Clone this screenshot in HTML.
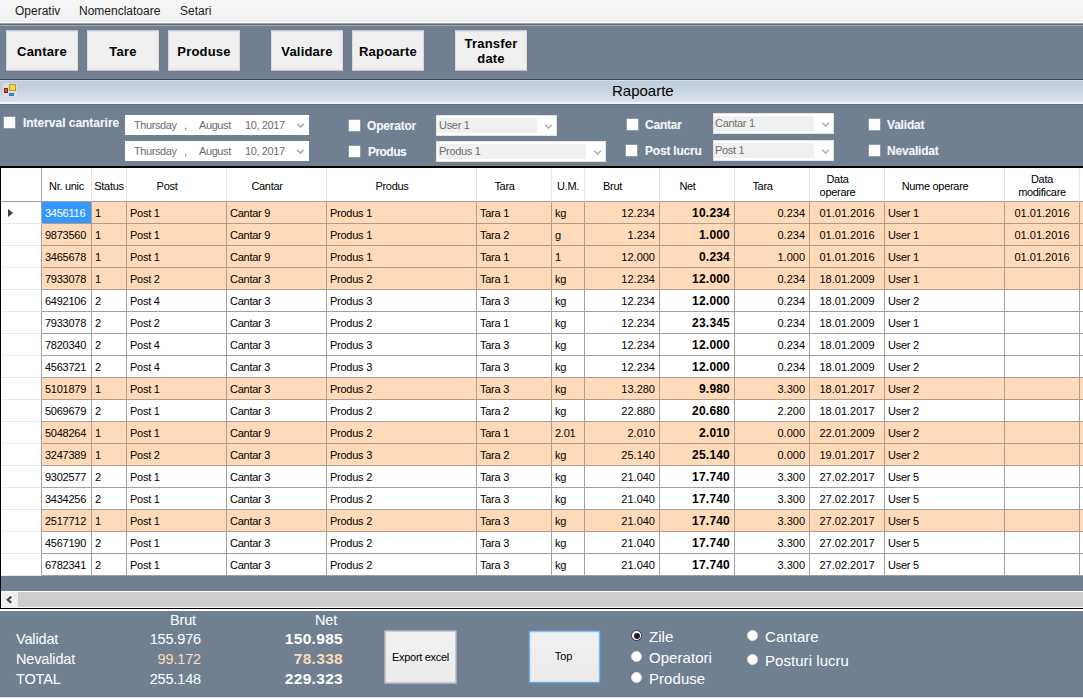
<!DOCTYPE html>
<html><head><meta charset="utf-8"><title>Rapoarte</title>
<style>
*{box-sizing:border-box;margin:0;padding:0}
html,body{width:1083px;height:699px;overflow:hidden}
body{background:#708090;font-family:"Liberation Sans",sans-serif;position:relative;color:#000}
.abs{position:absolute}
/* menu */
#menu{position:absolute;left:0;top:0;width:1083px;height:23px;background:linear-gradient(#f6f6f6,#f1f1f1);font-size:12px;color:#1a1a1a}
#menu span{position:absolute;top:4px;white-space:nowrap}
#mline{position:absolute;left:0;top:22px;width:1083px;height:4px;background:linear-gradient(#fdfdfd 0 25%,#9b9c9d 25% 50%,#67696c 50% 75%,#a0a8b2 75% 100%)}
/* toolbar buttons */
.tb{position:absolute;top:31px;transform:translateY(-0.5px);width:72px;height:40px;background:#efefef;border:1px solid #dadada;font-weight:bold;font-size:13px;text-align:center;line-height:40px;color:#000;letter-spacing:0.2px}
.tb.two{line-height:15px;padding-top:4px}
/* child title */
#tshadow{position:absolute;left:0;top:76px;width:1083px;height:4px;background:linear-gradient(#74818e 0 75%,#414c58 75% 100%)}
#title{position:absolute;left:0;top:80px;width:1083px;height:25px;background:linear-gradient(#d5dfe9 0 1px,#c1cedc 1px,#c6d2df 10px,#d3dde8 17px,#dce4ed 22px,#f3f7fb 22px,#f3f7fb 24px,#63707c 24px);font-size:15px;color:#000}
#title span{position:absolute;left:612px;top:2px}
/* filter */
.cb{position:absolute;width:11px;height:11px;background:#fff;box-shadow:0 0 0 0.5px rgba(255,255,255,.45)}
.fl{position:absolute;font-weight:bold;font-size:12px;color:rgba(255,255,255,.9);white-space:nowrap;letter-spacing:-0.2px;text-shadow:0 0 1px rgba(255,255,255,.35)}
.dp{position:absolute;left:125px;width:184px;height:20px;background:#fff;font-size:11px;color:#6d6d6d;white-space:nowrap}
.dp span{position:absolute;top:4px;letter-spacing:-0.4px}
.combo{position:absolute;height:21px;background:#fff;border:1px solid #e3e3e3}
.combo .in{position:absolute;left:1px;top:2px;bottom:2px;background:#f0f0f0;font-size:11px;color:#6d6d6d;line-height:14px;padding-left:1px;white-space:nowrap;letter-spacing:-0.3px}
.chev{position:absolute;width:9px;height:6px}
/* grid */
#grid{position:absolute;left:0;top:166px;width:1083px;height:443px;background:#000}
#gin{position:absolute;left:1px;top:168px;width:1082px;height:423px;background:#708090}
.hc{position:absolute;top:168px;height:34px;background:#fff;border-right:1px solid #e4e8ee;border-bottom:1px solid #a0a0a0;font-size:11px;text-align:center;display:flex;align-items:center;justify-content:center;line-height:13px;white-space:nowrap;padding-top:4px;letter-spacing:-0.3px}
.hc.two{padding-top:2px}
.hc.h0{border-right:1px solid #a0a0a0}
.rh{position:absolute;left:1px;width:41px;height:22px;background:#fff;border-right:1px solid #a0a0a0;border-bottom:1px solid #e4e8ee}
.c{position:absolute;height:22px;background:#fff;border-right:1px solid #a0a0a0;border-bottom:1px solid #a0a0a0;font-size:11px;line-height:21px;padding:1px 3px 0 3px;white-space:nowrap;overflow:hidden}
.c.p{background:#ffdab9;border-color:#b09c8c}
.c.al{letter-spacing:-0.25px}
.c.ar{text-align:right;padding-right:4px}
.c.arb{text-align:right;padding-right:4px;font-weight:bold;font-size:12px;letter-spacing:0.2px}
.c.ac{text-align:center}
.c.sel{background:#3399ff;color:#fff}
#arrow{position:absolute;left:8px;top:209px;width:0;height:0;border-left:5px solid #3c3c3c;border-top:4.5px solid transparent;border-bottom:4.5px solid transparent}
/* scrollbar */
#sb{position:absolute;left:1px;top:591px;width:1082px;height:17px;background:#cdcdcd;border-top:1px solid #fbfbfb;border-bottom:1px solid #f4f4f4}
#sbl{position:absolute;left:0;top:0;width:17px;height:15px;background:#f0f0f0}
/* bottom */
#wline{position:absolute;left:0;top:609px;width:1083px;height:2px;background:#fbfcfd}
.bt{position:absolute;font-size:14.5px;color:#fff;white-space:nowrap;letter-spacing:-0.15px;margin-top:1px}
.bt.rl{font-size:15px;letter-spacing:0.05px;margin-top:0}
.bt.r{text-align:right}
.bt.b{font-weight:bold;font-size:15.5px;letter-spacing:0.3px;margin-top:0}
.bt.pe{color:#ffdab9}
.btn{position:absolute;background:linear-gradient(#f1f1f1,#ebebeb);border:1px solid #dadada;font-size:11px;text-align:center;color:#000}
.rad{position:absolute;width:11px;height:11px;border-radius:50%;background:#fff;border:1px solid #e0e0e0}
.rad.on{border:1px solid #333}
.rad.on:after{content:"";position:absolute;left:1.5px;top:1.5px;width:6px;height:6px;border-radius:50%;background:#222}
#bstrip{position:absolute;left:0;top:696px;width:1083px;height:3px;background:#edf2f9;border-top:1px solid #687480}
</style></head><body>
<div id="menu"><span style="left:15px">Operativ</span><span style="left:79px">Nomenclatoare</span><span style="left:180px">Setari</span></div>
<div id="mline"></div>
<div class="tb" style="left:6px">Cantare</div>
<div class="tb" style="left:87px">Tare</div>
<div class="tb" style="left:168px">Produse</div>
<div class="tb" style="left:271px">Validare</div>
<div class="tb" style="left:352px">Rapoarte</div>
<div class="tb two" style="left:455px">Transfer<br>date</div>
<div id="tshadow"></div>
<div id="title">
<svg class="abs" style="left:3px;top:3px" width="14" height="14" viewBox="0 0 14 14"><rect x="0" y="0" width="14" height="14" fill="#dfe6ee" opacity=".6"/><rect x="6.5" y="1.5" width="6" height="6" fill="#f7d544" stroke="#c8961a"/><rect x="1.5" y="5.5" width="3" height="4" fill="#e5503f" stroke="#9a1d14"/><rect x="6.5" y="10.5" width="4" height="2" fill="#4d8eea" stroke="#3a6fd0"/></svg>
<span>Rapoarte</span></div>

<!-- filters -->
<div class="cb" style="left:4px;top:117px"></div><div class="fl" style="left:23px;top:116px;letter-spacing:-0.03px">Interval cantarire</div>
<div class="dp" style="top:115px"><span style="left:9px">Thursday</span><span style="left:59px">,</span><span style="left:74px">August</span><span style="left:120px">10, 2017</span>
<svg class="chev" style="left:171px;top:8px" viewBox="0 0 9 6"><path d="M1.2 0.8 L4.5 4.1 L7.8 0.8" fill="none" stroke="#a6a6a6" stroke-width="1.5"/></svg></div>
<div class="dp" style="top:141px"><span style="left:9px">Thursday</span><span style="left:59px">,</span><span style="left:74px">August</span><span style="left:120px">10, 2017</span>
<svg class="chev" style="left:171px;top:8px" viewBox="0 0 9 6"><path d="M1.2 0.8 L4.5 4.1 L7.8 0.8" fill="none" stroke="#a6a6a6" stroke-width="1.5"/></svg></div>

<div class="cb" style="left:349px;top:120px"></div><div class="fl" style="left:367px;top:119px">Operator</div>
<div class="cb" style="left:349px;top:146px"></div><div class="fl" style="left:368px;top:145px;letter-spacing:-0.55px">Produs</div>
<div class="combo" style="left:436px;top:115px;width:121px"><div class="in" style="width:99px">User 1</div>
<svg class="chev" style="left:107px;top:8px" viewBox="0 0 9 6"><path d="M1.2 0.8 L4.5 4.1 L7.8 0.8" fill="none" stroke="#b0b0b0" stroke-width="1.5"/></svg></div>
<div class="combo" style="left:436px;top:141px;width:170px"><div class="in" style="width:148px">Produs 1</div>
<svg class="chev" style="left:156px;top:8px" viewBox="0 0 9 6"><path d="M1.2 0.8 L4.5 4.1 L7.8 0.8" fill="none" stroke="#b0b0b0" stroke-width="1.5"/></svg></div>

<div class="cb" style="left:627px;top:119px"></div><div class="fl" style="left:645px;top:118px">Cantar</div>
<div class="cb" style="left:626px;top:145px"></div><div class="fl" style="left:645px;top:144px">Post lucru</div>
<div class="combo" style="left:713px;top:113px;width:121px"><div class="in" style="left:0;width:100px">Cantar 1</div>
<svg class="chev" style="left:107px;top:8px" viewBox="0 0 9 6"><path d="M1.2 0.8 L4.5 4.1 L7.8 0.8" fill="none" stroke="#b0b0b0" stroke-width="1.5"/></svg></div>
<div class="combo" style="left:713px;top:140px;width:121px"><div class="in" style="left:0;width:100px">Post 1</div>
<svg class="chev" style="left:107px;top:8px" viewBox="0 0 9 6"><path d="M1.2 0.8 L4.5 4.1 L7.8 0.8" fill="none" stroke="#b0b0b0" stroke-width="1.5"/></svg></div>

<div class="cb" style="left:869px;top:119px"></div><div class="fl" style="left:887px;top:118px">Validat</div>
<div class="cb" style="left:869px;top:145px"></div><div class="fl" style="left:887px;top:144px">Nevalidat</div>

<!-- grid -->
<div id="grid"></div>
<div id="gin"></div>
<div class="hc h0" style="left:1px;width:41px"><span></span></div>
<div class="hc" style="left:42px;width:50px"><span>Nr. unic</span></div>
<div class="hc" style="left:92px;width:35px"><span>Status</span></div>
<div class="hc" style="left:127px;width:100px;padding-right:19px"><span>Post</span></div>
<div class="hc" style="left:227px;width:100px;padding-right:19px"><span>Cantar</span></div>
<div class="hc" style="left:327px;width:150px;padding-right:19px"><span>Produs</span></div>
<div class="hc" style="left:477px;width:75px;padding-right:19px"><span>Tara</span></div>
<div class="hc" style="left:552px;width:33px"><span>U.M.</span></div>
<div class="hc" style="left:585px;width:75px;padding-right:19px"><span>Brut</span></div>
<div class="hc" style="left:660px;width:75px;padding-right:19px"><span>Net</span></div>
<div class="hc" style="left:735px;width:75px;padding-right:19px"><span>Tara</span></div>
<div class="hc two" style="left:810px;width:75px;padding-right:19px"><span>Data<br>operare</span></div>
<div class="hc" style="left:885px;width:120px;padding-right:19px"><span>Nume operare</span></div>
<div class="hc two" style="left:1005px;width:75px"><span>Data<br>modificare</span></div>
<div class="hc" style="left:1080px;width:75px"><span></span></div>
<div class="rh" style="top:202px"></div>
<div class="c al p sel" style="left:42px;top:202px;width:50px">3456116</div>
<div class="c al p" style="left:92px;top:202px;width:35px">1</div>
<div class="c al p" style="left:127px;top:202px;width:100px">Post 1</div>
<div class="c al p" style="left:227px;top:202px;width:100px">Cantar 9</div>
<div class="c al p" style="left:327px;top:202px;width:150px">Produs 1</div>
<div class="c al p" style="left:477px;top:202px;width:75px">Tara 1</div>
<div class="c al p" style="left:552px;top:202px;width:33px">kg</div>
<div class="c ar p" style="left:585px;top:202px;width:75px">12.234</div>
<div class="c arb p" style="left:660px;top:202px;width:75px">10.234</div>
<div class="c ar p" style="left:735px;top:202px;width:75px">0.234</div>
<div class="c ac p" style="left:810px;top:202px;width:75px">01.01.2016</div>
<div class="c al p" style="left:885px;top:202px;width:120px">User 1</div>
<div class="c ac p" style="left:1005px;top:202px;width:75px">01.01.2016</div>
<div class="c al p" style="left:1080px;top:202px;width:75px"></div>
<div class="rh" style="top:224px"></div>
<div class="c al p" style="left:42px;top:224px;width:50px">9873560</div>
<div class="c al p" style="left:92px;top:224px;width:35px">1</div>
<div class="c al p" style="left:127px;top:224px;width:100px">Post 1</div>
<div class="c al p" style="left:227px;top:224px;width:100px">Cantar 9</div>
<div class="c al p" style="left:327px;top:224px;width:150px">Produs 1</div>
<div class="c al p" style="left:477px;top:224px;width:75px">Tara 2</div>
<div class="c al p" style="left:552px;top:224px;width:33px">g</div>
<div class="c ar p" style="left:585px;top:224px;width:75px">1.234</div>
<div class="c arb p" style="left:660px;top:224px;width:75px">1.000</div>
<div class="c ar p" style="left:735px;top:224px;width:75px">0.234</div>
<div class="c ac p" style="left:810px;top:224px;width:75px">01.01.2016</div>
<div class="c al p" style="left:885px;top:224px;width:120px">User 1</div>
<div class="c ac p" style="left:1005px;top:224px;width:75px">01.01.2016</div>
<div class="c al p" style="left:1080px;top:224px;width:75px"></div>
<div class="rh" style="top:246px"></div>
<div class="c al p" style="left:42px;top:246px;width:50px">3465678</div>
<div class="c al p" style="left:92px;top:246px;width:35px">1</div>
<div class="c al p" style="left:127px;top:246px;width:100px">Post 1</div>
<div class="c al p" style="left:227px;top:246px;width:100px">Cantar 9</div>
<div class="c al p" style="left:327px;top:246px;width:150px">Produs 1</div>
<div class="c al p" style="left:477px;top:246px;width:75px">Tara 1</div>
<div class="c al p" style="left:552px;top:246px;width:33px">1</div>
<div class="c ar p" style="left:585px;top:246px;width:75px">12.000</div>
<div class="c arb p" style="left:660px;top:246px;width:75px">0.234</div>
<div class="c ar p" style="left:735px;top:246px;width:75px">1.000</div>
<div class="c ac p" style="left:810px;top:246px;width:75px">01.01.2016</div>
<div class="c al p" style="left:885px;top:246px;width:120px">User 1</div>
<div class="c ac p" style="left:1005px;top:246px;width:75px">01.01.2016</div>
<div class="c al p" style="left:1080px;top:246px;width:75px"></div>
<div class="rh" style="top:268px"></div>
<div class="c al p" style="left:42px;top:268px;width:50px">7933078</div>
<div class="c al p" style="left:92px;top:268px;width:35px">1</div>
<div class="c al p" style="left:127px;top:268px;width:100px">Post 2</div>
<div class="c al p" style="left:227px;top:268px;width:100px">Cantar 3</div>
<div class="c al p" style="left:327px;top:268px;width:150px">Produs 2</div>
<div class="c al p" style="left:477px;top:268px;width:75px">Tara 1</div>
<div class="c al p" style="left:552px;top:268px;width:33px">kg</div>
<div class="c ar p" style="left:585px;top:268px;width:75px">12.234</div>
<div class="c arb p" style="left:660px;top:268px;width:75px">12.000</div>
<div class="c ar p" style="left:735px;top:268px;width:75px">0.234</div>
<div class="c ac p" style="left:810px;top:268px;width:75px">18.01.2009</div>
<div class="c al p" style="left:885px;top:268px;width:120px">User 1</div>
<div class="c ac p" style="left:1005px;top:268px;width:75px"></div>
<div class="c al p" style="left:1080px;top:268px;width:75px"></div>
<div class="rh" style="top:290px"></div>
<div class="c al" style="left:42px;top:290px;width:50px">6492106</div>
<div class="c al" style="left:92px;top:290px;width:35px">2</div>
<div class="c al" style="left:127px;top:290px;width:100px">Post 4</div>
<div class="c al" style="left:227px;top:290px;width:100px">Cantar 3</div>
<div class="c al" style="left:327px;top:290px;width:150px">Produs 3</div>
<div class="c al" style="left:477px;top:290px;width:75px">Tara 3</div>
<div class="c al" style="left:552px;top:290px;width:33px">kg</div>
<div class="c ar" style="left:585px;top:290px;width:75px">12.234</div>
<div class="c arb" style="left:660px;top:290px;width:75px">12.000</div>
<div class="c ar" style="left:735px;top:290px;width:75px">0.234</div>
<div class="c ac" style="left:810px;top:290px;width:75px">18.01.2009</div>
<div class="c al" style="left:885px;top:290px;width:120px">User 2</div>
<div class="c ac" style="left:1005px;top:290px;width:75px"></div>
<div class="c al" style="left:1080px;top:290px;width:75px"></div>
<div class="rh" style="top:312px"></div>
<div class="c al" style="left:42px;top:312px;width:50px">7933078</div>
<div class="c al" style="left:92px;top:312px;width:35px">2</div>
<div class="c al" style="left:127px;top:312px;width:100px">Post 2</div>
<div class="c al" style="left:227px;top:312px;width:100px">Cantar 3</div>
<div class="c al" style="left:327px;top:312px;width:150px">Produs 2</div>
<div class="c al" style="left:477px;top:312px;width:75px">Tara 1</div>
<div class="c al" style="left:552px;top:312px;width:33px">kg</div>
<div class="c ar" style="left:585px;top:312px;width:75px">12.234</div>
<div class="c arb" style="left:660px;top:312px;width:75px">23.345</div>
<div class="c ar" style="left:735px;top:312px;width:75px">0.234</div>
<div class="c ac" style="left:810px;top:312px;width:75px">18.01.2009</div>
<div class="c al" style="left:885px;top:312px;width:120px">User 1</div>
<div class="c ac" style="left:1005px;top:312px;width:75px"></div>
<div class="c al" style="left:1080px;top:312px;width:75px"></div>
<div class="rh" style="top:334px"></div>
<div class="c al" style="left:42px;top:334px;width:50px">7820340</div>
<div class="c al" style="left:92px;top:334px;width:35px">2</div>
<div class="c al" style="left:127px;top:334px;width:100px">Post 4</div>
<div class="c al" style="left:227px;top:334px;width:100px">Cantar 3</div>
<div class="c al" style="left:327px;top:334px;width:150px">Produs 3</div>
<div class="c al" style="left:477px;top:334px;width:75px">Tara 3</div>
<div class="c al" style="left:552px;top:334px;width:33px">kg</div>
<div class="c ar" style="left:585px;top:334px;width:75px">12.234</div>
<div class="c arb" style="left:660px;top:334px;width:75px">12.000</div>
<div class="c ar" style="left:735px;top:334px;width:75px">0.234</div>
<div class="c ac" style="left:810px;top:334px;width:75px">18.01.2009</div>
<div class="c al" style="left:885px;top:334px;width:120px">User 2</div>
<div class="c ac" style="left:1005px;top:334px;width:75px"></div>
<div class="c al" style="left:1080px;top:334px;width:75px"></div>
<div class="rh" style="top:356px"></div>
<div class="c al" style="left:42px;top:356px;width:50px">4563721</div>
<div class="c al" style="left:92px;top:356px;width:35px">2</div>
<div class="c al" style="left:127px;top:356px;width:100px">Post 4</div>
<div class="c al" style="left:227px;top:356px;width:100px">Cantar 3</div>
<div class="c al" style="left:327px;top:356px;width:150px">Produs 3</div>
<div class="c al" style="left:477px;top:356px;width:75px">Tara 3</div>
<div class="c al" style="left:552px;top:356px;width:33px">kg</div>
<div class="c ar" style="left:585px;top:356px;width:75px">12.234</div>
<div class="c arb" style="left:660px;top:356px;width:75px">12.000</div>
<div class="c ar" style="left:735px;top:356px;width:75px">0.234</div>
<div class="c ac" style="left:810px;top:356px;width:75px">18.01.2009</div>
<div class="c al" style="left:885px;top:356px;width:120px">User 2</div>
<div class="c ac" style="left:1005px;top:356px;width:75px"></div>
<div class="c al" style="left:1080px;top:356px;width:75px"></div>
<div class="rh" style="top:378px"></div>
<div class="c al p" style="left:42px;top:378px;width:50px">5101879</div>
<div class="c al p" style="left:92px;top:378px;width:35px">1</div>
<div class="c al p" style="left:127px;top:378px;width:100px">Post 1</div>
<div class="c al p" style="left:227px;top:378px;width:100px">Cantar 3</div>
<div class="c al p" style="left:327px;top:378px;width:150px">Produs 2</div>
<div class="c al p" style="left:477px;top:378px;width:75px">Tara 3</div>
<div class="c al p" style="left:552px;top:378px;width:33px">kg</div>
<div class="c ar p" style="left:585px;top:378px;width:75px">13.280</div>
<div class="c arb p" style="left:660px;top:378px;width:75px">9.980</div>
<div class="c ar p" style="left:735px;top:378px;width:75px">3.300</div>
<div class="c ac p" style="left:810px;top:378px;width:75px">18.01.2017</div>
<div class="c al p" style="left:885px;top:378px;width:120px">User 2</div>
<div class="c ac p" style="left:1005px;top:378px;width:75px"></div>
<div class="c al p" style="left:1080px;top:378px;width:75px"></div>
<div class="rh" style="top:400px"></div>
<div class="c al" style="left:42px;top:400px;width:50px">5069679</div>
<div class="c al" style="left:92px;top:400px;width:35px">2</div>
<div class="c al" style="left:127px;top:400px;width:100px">Post 1</div>
<div class="c al" style="left:227px;top:400px;width:100px">Cantar 3</div>
<div class="c al" style="left:327px;top:400px;width:150px">Produs 2</div>
<div class="c al" style="left:477px;top:400px;width:75px">Tara 2</div>
<div class="c al" style="left:552px;top:400px;width:33px">kg</div>
<div class="c ar" style="left:585px;top:400px;width:75px">22.880</div>
<div class="c arb" style="left:660px;top:400px;width:75px">20.680</div>
<div class="c ar" style="left:735px;top:400px;width:75px">2.200</div>
<div class="c ac" style="left:810px;top:400px;width:75px">18.01.2017</div>
<div class="c al" style="left:885px;top:400px;width:120px">User 2</div>
<div class="c ac" style="left:1005px;top:400px;width:75px"></div>
<div class="c al" style="left:1080px;top:400px;width:75px"></div>
<div class="rh" style="top:422px"></div>
<div class="c al p" style="left:42px;top:422px;width:50px">5048264</div>
<div class="c al p" style="left:92px;top:422px;width:35px">1</div>
<div class="c al p" style="left:127px;top:422px;width:100px">Post 1</div>
<div class="c al p" style="left:227px;top:422px;width:100px">Cantar 9</div>
<div class="c al p" style="left:327px;top:422px;width:150px">Produs 2</div>
<div class="c al p" style="left:477px;top:422px;width:75px">Tara 1</div>
<div class="c al p" style="left:552px;top:422px;width:33px">2.01</div>
<div class="c ar p" style="left:585px;top:422px;width:75px">2.010</div>
<div class="c arb p" style="left:660px;top:422px;width:75px">2.010</div>
<div class="c ar p" style="left:735px;top:422px;width:75px">0.000</div>
<div class="c ac p" style="left:810px;top:422px;width:75px">22.01.2009</div>
<div class="c al p" style="left:885px;top:422px;width:120px">User 2</div>
<div class="c ac p" style="left:1005px;top:422px;width:75px"></div>
<div class="c al p" style="left:1080px;top:422px;width:75px"></div>
<div class="rh" style="top:444px"></div>
<div class="c al p" style="left:42px;top:444px;width:50px">3247389</div>
<div class="c al p" style="left:92px;top:444px;width:35px">1</div>
<div class="c al p" style="left:127px;top:444px;width:100px">Post 2</div>
<div class="c al p" style="left:227px;top:444px;width:100px">Cantar 3</div>
<div class="c al p" style="left:327px;top:444px;width:150px">Produs 3</div>
<div class="c al p" style="left:477px;top:444px;width:75px">Tara 2</div>
<div class="c al p" style="left:552px;top:444px;width:33px">kg</div>
<div class="c ar p" style="left:585px;top:444px;width:75px">25.140</div>
<div class="c arb p" style="left:660px;top:444px;width:75px">25.140</div>
<div class="c ar p" style="left:735px;top:444px;width:75px">0.000</div>
<div class="c ac p" style="left:810px;top:444px;width:75px">19.01.2017</div>
<div class="c al p" style="left:885px;top:444px;width:120px">User 2</div>
<div class="c ac p" style="left:1005px;top:444px;width:75px"></div>
<div class="c al p" style="left:1080px;top:444px;width:75px"></div>
<div class="rh" style="top:466px"></div>
<div class="c al" style="left:42px;top:466px;width:50px">9302577</div>
<div class="c al" style="left:92px;top:466px;width:35px">2</div>
<div class="c al" style="left:127px;top:466px;width:100px">Post 1</div>
<div class="c al" style="left:227px;top:466px;width:100px">Cantar 3</div>
<div class="c al" style="left:327px;top:466px;width:150px">Produs 2</div>
<div class="c al" style="left:477px;top:466px;width:75px">Tara 3</div>
<div class="c al" style="left:552px;top:466px;width:33px">kg</div>
<div class="c ar" style="left:585px;top:466px;width:75px">21.040</div>
<div class="c arb" style="left:660px;top:466px;width:75px">17.740</div>
<div class="c ar" style="left:735px;top:466px;width:75px">3.300</div>
<div class="c ac" style="left:810px;top:466px;width:75px">27.02.2017</div>
<div class="c al" style="left:885px;top:466px;width:120px">User 5</div>
<div class="c ac" style="left:1005px;top:466px;width:75px"></div>
<div class="c al" style="left:1080px;top:466px;width:75px"></div>
<div class="rh" style="top:488px"></div>
<div class="c al" style="left:42px;top:488px;width:50px">3434256</div>
<div class="c al" style="left:92px;top:488px;width:35px">2</div>
<div class="c al" style="left:127px;top:488px;width:100px">Post 1</div>
<div class="c al" style="left:227px;top:488px;width:100px">Cantar 3</div>
<div class="c al" style="left:327px;top:488px;width:150px">Produs 2</div>
<div class="c al" style="left:477px;top:488px;width:75px">Tara 3</div>
<div class="c al" style="left:552px;top:488px;width:33px">kg</div>
<div class="c ar" style="left:585px;top:488px;width:75px">21.040</div>
<div class="c arb" style="left:660px;top:488px;width:75px">17.740</div>
<div class="c ar" style="left:735px;top:488px;width:75px">3.300</div>
<div class="c ac" style="left:810px;top:488px;width:75px">27.02.2017</div>
<div class="c al" style="left:885px;top:488px;width:120px">User 5</div>
<div class="c ac" style="left:1005px;top:488px;width:75px"></div>
<div class="c al" style="left:1080px;top:488px;width:75px"></div>
<div class="rh" style="top:510px"></div>
<div class="c al p" style="left:42px;top:510px;width:50px">2517712</div>
<div class="c al p" style="left:92px;top:510px;width:35px">1</div>
<div class="c al p" style="left:127px;top:510px;width:100px">Post 1</div>
<div class="c al p" style="left:227px;top:510px;width:100px">Cantar 3</div>
<div class="c al p" style="left:327px;top:510px;width:150px">Produs 2</div>
<div class="c al p" style="left:477px;top:510px;width:75px">Tara 3</div>
<div class="c al p" style="left:552px;top:510px;width:33px">kg</div>
<div class="c ar p" style="left:585px;top:510px;width:75px">21.040</div>
<div class="c arb p" style="left:660px;top:510px;width:75px">17.740</div>
<div class="c ar p" style="left:735px;top:510px;width:75px">3.300</div>
<div class="c ac p" style="left:810px;top:510px;width:75px">27.02.2017</div>
<div class="c al p" style="left:885px;top:510px;width:120px">User 5</div>
<div class="c ac p" style="left:1005px;top:510px;width:75px"></div>
<div class="c al p" style="left:1080px;top:510px;width:75px"></div>
<div class="rh" style="top:532px"></div>
<div class="c al" style="left:42px;top:532px;width:50px">4567190</div>
<div class="c al" style="left:92px;top:532px;width:35px">2</div>
<div class="c al" style="left:127px;top:532px;width:100px">Post 1</div>
<div class="c al" style="left:227px;top:532px;width:100px">Cantar 3</div>
<div class="c al" style="left:327px;top:532px;width:150px">Produs 2</div>
<div class="c al" style="left:477px;top:532px;width:75px">Tara 3</div>
<div class="c al" style="left:552px;top:532px;width:33px">kg</div>
<div class="c ar" style="left:585px;top:532px;width:75px">21.040</div>
<div class="c arb" style="left:660px;top:532px;width:75px">17.740</div>
<div class="c ar" style="left:735px;top:532px;width:75px">3.300</div>
<div class="c ac" style="left:810px;top:532px;width:75px">27.02.2017</div>
<div class="c al" style="left:885px;top:532px;width:120px">User 5</div>
<div class="c ac" style="left:1005px;top:532px;width:75px"></div>
<div class="c al" style="left:1080px;top:532px;width:75px"></div>
<div class="rh" style="top:554px"></div>
<div class="c al" style="left:42px;top:554px;width:50px">6782341</div>
<div class="c al" style="left:92px;top:554px;width:35px">2</div>
<div class="c al" style="left:127px;top:554px;width:100px">Post 1</div>
<div class="c al" style="left:227px;top:554px;width:100px">Cantar 3</div>
<div class="c al" style="left:327px;top:554px;width:150px">Produs 2</div>
<div class="c al" style="left:477px;top:554px;width:75px">Tara 3</div>
<div class="c al" style="left:552px;top:554px;width:33px">kg</div>
<div class="c ar" style="left:585px;top:554px;width:75px">21.040</div>
<div class="c arb" style="left:660px;top:554px;width:75px">17.740</div>
<div class="c ar" style="left:735px;top:554px;width:75px">3.300</div>
<div class="c ac" style="left:810px;top:554px;width:75px">27.02.2017</div>
<div class="c al" style="left:885px;top:554px;width:120px">User 5</div>
<div class="c ac" style="left:1005px;top:554px;width:75px"></div>
<div class="c al" style="left:1080px;top:554px;width:75px"></div>
<div id="arrow"></div>
<div id="sb"><div id="sbl"><svg class="abs" style="left:5px;top:4px" width="7" height="8" viewBox="0 0 7 8"><path d="M5.3 0.6 L1.7 3.7 L5.3 6.8" fill="none" stroke="#454545" stroke-width="2.1"/></svg></div></div>
<div id="wline"></div>

<!-- bottom -->
<div class="bt" style="left:170px;top:611px">Brut</div>
<div class="bt" style="left:315px;top:611px">Net</div>
<div class="bt" style="left:16px;top:630px">Validat</div>
<div class="bt" style="left:16px;top:650px">Nevalidat</div>
<div class="bt" style="left:16px;top:670px">TOTAL</div>
<div class="bt r" style="left:101px;width:100px;top:630px">155.976</div>
<div class="bt r pe" style="left:101px;width:100px;top:650px">99.172</div>
<div class="bt r" style="left:101px;width:100px;top:670px">255.148</div>
<div class="bt r b" style="left:243px;width:100px;top:630px">150.985</div>
<div class="bt r b pe" style="left:243px;width:100px;top:650px">78.338</div>
<div class="bt r b" style="left:243px;width:100px;top:670px">229.323</div>
<div class="btn" style="left:384px;top:630px;width:72px;height:53px;line-height:51px;transform:translate(.5px,.5px);letter-spacing:-0.3px">Export excel</div>
<div class="btn" style="left:528px;top:630px;width:72px;height:53px;line-height:50px;padding-right:2px;transform:translate(.5px,.4px);border:1px solid #4f9fe6;box-shadow:inset 0 0 0 1px #bcdcf7">Top</div>
<div class="rad on" style="left:631px;top:630px"></div><div class="bt rl" style="left:649px;top:628px">Zile</div>
<div class="rad" style="left:631px;top:651px"></div><div class="bt rl" style="left:649px;top:649px">Operatori</div>
<div class="rad" style="left:631px;top:672px"></div><div class="bt rl" style="left:649px;top:670px">Produse</div>
<div class="rad" style="left:747px;top:630px"></div><div class="bt rl" style="left:765px;top:628px">Cantare</div>
<div class="rad" style="left:747px;top:654px"></div><div class="bt rl" style="left:765px;top:652px">Posturi lucru</div>
<div id="bstrip"></div>
</body></html>
